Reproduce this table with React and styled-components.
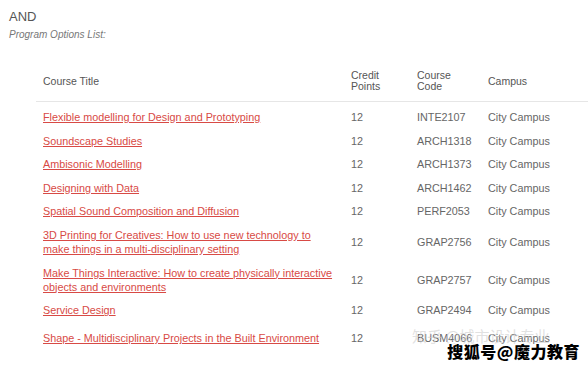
import React from "react";
import styled, { createGlobalStyle } from "styled-components";

const GlobalStyle = createGlobalStyle`
  html, body {
    margin: 0;
    padding: 0;
    background: #ffffff;
  }
  body {
    font-family: "Liberation Sans", Arial, sans-serif;
  }
`;

const Page = styled.div`
  position: relative;
  width: 588px;
  height: 369px;
  overflow: hidden;
  padding: 9px 0 0 9px;
  box-sizing: border-box;
`;

const Heading = styled.div`
  font-size: 13px;
  color: #555;
  line-height: 15px;
`;

const SubHeading = styled.div`
  margin-top: 5px;
  font-size: 10px;
  font-style: italic;
  color: #777;
  line-height: 12px;
`;

const Table = styled.table`
  margin: 21px 0 0 27px;
  width: 552px;
  border-collapse: collapse;
  font-size: 10.8px;
  color: #666;

  th {
    font-weight: normal;
    text-align: left;
    color: #555;
    font-size: 10.5px;
    line-height: 11px;
    padding: 8px 7px 9px;
    height: 22px;
    border-bottom: 1px solid #e6e6e6;
    vertical-align: middle;
  }

  td {
    line-height: 14px;
    padding: 5px 7px 4.6px;
    vertical-align: middle;
  }

  td:first-child {
    padding-right: 9px;
  }

  tbody tr:first-child td {
    padding-top: 8px;
  }

  tbody tr:last-child td {
    padding-top: 9.5px;
  }
`;

const TitleCol = styled.col`
  width: 308px;
`;
const CreditCol = styled.col`
  width: 66px;
`;
const CodeCol = styled.col`
  width: 71px;
`;

const CourseLink = styled.a`
  color: #d84a45;
  text-decoration: underline;
  cursor: pointer;
`;

const Watermark = styled.div`
  position: absolute;
  right: 8px;
  bottom: 6px;
  font-family: "Noto Sans CJK SC", sans-serif;
  font-weight: 900;
  font-size: 16px;
  color: #000;
  letter-spacing: 0.5px;
  text-shadow: 1px 1px 0 #fff, -1px -1px 0 #fff, 1px -1px 0 #fff, -1px 1px 0 #fff;
`;

const FaintMark = styled.div`
  position: absolute;
  left: 412px;
  bottom: 23px;
  font-family: "Noto Sans CJK SC", sans-serif;
  font-size: 15px;
  color: rgba(205, 205, 205, 0.6);
`;

const courses = [
  ["Flexible modelling for Design and Prototyping", "INTE2107"],
  ["Soundscape Studies", "ARCH1318"],
  ["Ambisonic Modelling", "ARCH1373"],
  ["Designing with Data", "ARCH1462"],
  ["Spatial Sound Composition and Diffusion", "PERF2053"],
  ["3D Printing for Creatives: How to use new technology to make things in a multi-disciplinary setting", "GRAP2756"],
  ["Make Things Interactive: How to create physically interactive objects and environments", "GRAP2757"],
  ["Service Design", "GRAP2494"],
  ["Shape - Multidisciplinary Projects in the Built Environment", "BUSM4066"],
];

export default function App() {
  return (
    <>
      <GlobalStyle />
      <Page>
        <Heading>AND</Heading>
        <SubHeading>Program Options List:</SubHeading>
        <Table>
          <colgroup>
            <TitleCol />
            <CreditCol />
            <CodeCol />
            <col />
          </colgroup>
          <thead>
            <tr>
              <th>Course Title</th>
              <th>Credit<br />Points</th>
              <th>Course<br />Code</th>
              <th>Campus</th>
            </tr>
          </thead>
          <tbody>
            {courses.map(([title, code]) => (
              <tr key={code}>
                <td><CourseLink>{title}</CourseLink></td>
                <td>12</td>
                <td>{code}</td>
                <td>City Campus</td>
              </tr>
            ))}
          </tbody>
        </Table>
        <FaintMark>知乎 @城市设计专业</FaintMark>
        <Watermark>搜狐号@魔力教育</Watermark>
      </Page>
    </>
  );
}
